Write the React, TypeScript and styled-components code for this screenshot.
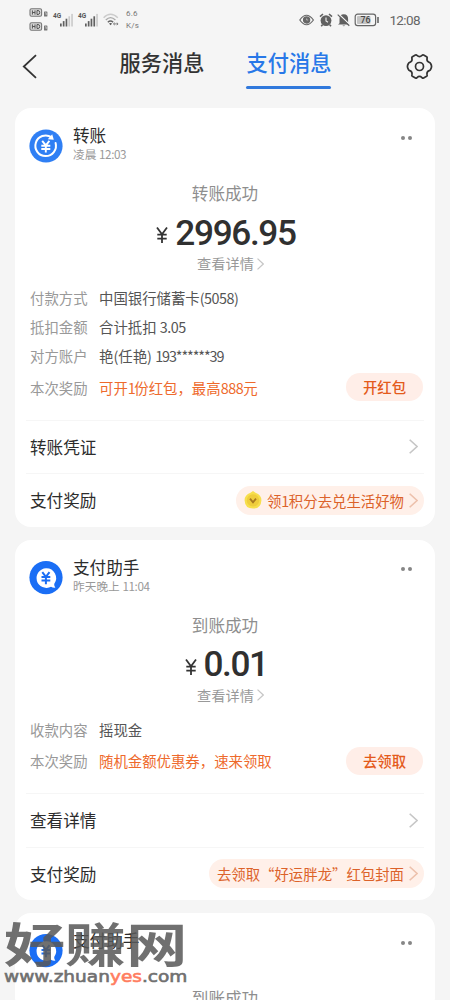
import React from 'react';
import styled, { createGlobalStyle } from 'styled-components';

const Global = createGlobalStyle`
  * { box-sizing: border-box; }
  html, body { margin: 0; padding: 0; overflow: hidden; }
  body {
    background: #f5f5f5;
    color: #333;
    font-family: "Noto Sans CJK SC", sans-serif;
  }
`;

const Page = styled.div`
  position: relative;
  width: 450px;
  height: 1000px;
  overflow: hidden;
  background: #f5f5f5;
`;

const StatusBar = styled.div`
  display: flex;
  justify-content: space-between;
  align-items: center;
  height: 38px;
  padding: 2px 30px 0 29px;
`;

const StatusGroup = styled.div`
  display: flex;
  align-items: center;
`;

const Clock = styled.span`
  font: 400 13.5px/20px Roboto, sans-serif;
  color: #666;
  margin-left: 7px;
  letter-spacing: -0.6px;
`;

const NavBar = styled.div`
  display: flex;
  align-items: center;
  justify-content: space-between;
  height: 57px;
  padding: 0 17px 0 22px;
`;

const Tabs = styled.div`
  display: flex;
  gap: 41px;
  margin-left: 82px;
  flex: 1;
`;

const Tab = styled.div<{ $active?: boolean }>`
  width: 86px;
  height: 51px;
  padding-top: 6px;
  white-space: nowrap;
  text-align: center;
  font-size: 21.2px;
  line-height: 30px;
  font-weight: 500;
  color: ${p => (p.$active ? '#2878e8' : '#333')};
`;

const TabLine = styled.div`
  height: 2.5px;
  margin: 9px 1px 0 0;
  border-radius: 2px;
  background: #3179dc;
`;

const Cards = styled.div`
  display: flex;
  flex-direction: column;
  gap: 13px;
  padding: 13px 15px 0;
`;

const CardBox = styled.section`
  padding: 0 11px;
  border-radius: 16px;
  background: #fff;
`;

const Head = styled.header`
  display: flex;
  height: 71px;
  padding: 21px 12.5px 0 3px;
`;

const HeadText = styled.div`
  flex: 1;
  margin: -5px 0 0 10px;
`;

const Title = styled.div`
  font-size: 16.6px;
  line-height: 23px;
  color: #2c2c2c;
`;

const Time = styled.div`
  font-size: 11.7px;
  line-height: 14px;
  color: #999;
`;

const Digits = styled.span<{ $track?: number }>`
  letter-spacing: ${p => p.$track ?? -0.5}px;
`;

const Dots = styled.div`
  display: flex;
  gap: 2.5px;
  margin-top: 6.5px;
  i { width: 4px; height: 4px; border-radius: 50%; background: #868686; }
`;

const State = styled.div`
  height: 29px;
  line-height: 29px;
  font-size: 16.6px;
  text-align: center;
  color: #8e8e8e;
`;

const Amount = styled.div`
  display: flex;
  justify-content: center;
  align-items: center;
  height: 46px;
  padding: 3px 0 0 2px;
  font: 500 35.2px/46px Roboto, sans-serif;
  color: #303030;
`;

const Yen = styled.svg`
  width: 12px;
  height: 18px;
  margin: 5px 7px 0 0;
`;

const Figure = styled.span<{ $squeeze: number }>`
  letter-spacing: ${p => p.$squeeze}px;
`;

const Detail = styled.div`
  display: flex;
  justify-content: center;
  align-items: center;
  gap: 3px;
  height: 19px;
  margin-bottom: 10px;
  padding-left: 11px;
  font-size: 14.2px;
  line-height: 17px;
  color: #999;
`;

const Info = styled.div<{ $reward?: boolean }>`
  display: flex;
  align-items: center;
  height: ${p => (p.$reward ? 34 : 29)}px;
  padding: 0 1px 0 4px;
  font-size: 14.4px;
  color: ${p => (p.$reward ? '#ee6a2c' : '#555')};
`;

const Label = styled.span`
  width: 69px;
  color: #999;
`;

const Pill = styled.span`
  width: 77px;
  height: 28px;
  margin-left: auto;
  border-radius: 14px;
  background: #ffeee8;
  color: #e45b1c;
  font-weight: 500;
  line-height: 27px;
  text-align: center;
`;

const Actions = styled.div`
  margin-top: 15.5px;
`;

const Action = styled.div`
  display: flex;
  align-items: center;
  justify-content: space-between;
  height: 53.5px;
  padding-left: 4px;
  border-top: 1px solid #f6f6f6;
  font-size: 16.6px;
  color: #2c2c2c;
`;

const Arrow = styled.span`
  display: flex;
  margin-right: 6px;
`;

const Promo = styled.span`
  display: flex;
  align-items: center;
  height: 29px;
  padding: 0 6px 0 8px;
  border-radius: 15px;
  background: #fff0e9;
  color: #dc622a;
  font-size: 14.4px;
  white-space: nowrap;
  svg:last-child { margin-left: 5px; }
`;

const Coin = styled.svg`
  width: 18px;
  height: 18px;
  margin-right: 4.5px;
`;

const Watermark = styled.div`
  position: absolute;
  left: 4px;
  top: 914px;
  width: 184px;
  white-space: nowrap;
`;

const MarkName = styled.div`
  width: 138px;
  height: 54px;
  font-size: 47px;
  line-height: 56px;
  font-weight: 700;
  color: rgba(88, 88, 88, 0.86);
  transform: scaleX(1.3);
  transform-origin: 0 0;
`;

const MarkUrl = styled.div`
  width: 180px;
  padding-top: 1px;
  font: 400 15.5px/16px "DejaVu Sans", sans-serif;
  color: #707070;
  -webkit-text-stroke: 0.6px currentColor;
  transform: scaleX(1.195);
  transform-origin: 0 0;
  b { font-weight: 400; color: #ff7d60; }
`;

function Chevron({ w = 8, h = 15, color = '#c6c6c6' }: { w?: number; h?: number; color?: string }) {
  return (
    <svg width={w} height={h} viewBox="0 0 8 15" fill="none" stroke={color} strokeWidth="1.4" preserveAspectRatio="none">
      <path d="M.6.7 7.2 7.5.6 14.3" />
    </svg>
  );
}

function HdIcon() {
  return (
    <svg width="20" height="24" viewBox="0 0 20 24">
      {[0, 14].map(y => (
        <g key={y} transform={`translate(0 ${y})`}>
          <rect x="1" y=".7" width="11.6" height="7.6" rx="1.5" fill="#d8d8d8" stroke="#777" strokeWidth="1.1" />
          <path d="M3.4 2.4v4.2M6 2.4v4.2M3.4 4.5h2.6M8 2.5v4h1q1.7 0 1.7-2t-1.7-2z" fill="none" stroke="#555" strokeWidth="1" />
          <rect x="15" y="3.4" width="3.4" height="5.2" rx=".6" fill="#777" />
          <path d="M16.1 4.8h1.1v2.2" stroke="#eee" strokeWidth=".6" fill="none" />
        </g>
      ))}
    </svg>
  );
}

const NetLabel = styled.span`
  align-self: flex-start;
  margin: 4px 0 0 4px;
  width: 7px;
  font: 700 6.5px/8px Roboto, sans-serif;
  color: #555;
`;

const Speed = styled.span`
  display: flex;
  flex-direction: column;
  width: 16px;
  margin: 0 0 0 7px;
  font: 400 8px/12px Roboto, sans-serif;
  letter-spacing: 0.2px;
  color: #777;
`;

function Signal({ level }: { level: number }) {
  return (
    <svg width="14" height="14" viewBox="0 0 14 14">
      {[0, 1, 2, 3, 4].map(i => (
        <rect key={i} x={i * 2.8} y={10.5 - i * 2.4} width="1.7" height={3 + i * 2.4} fill={i < level ? '#606060' : '#ccc'} />
      ))}
    </svg>
  );
}

function WifiIcon() {
  return (
    <svg width="16" height="14" viewBox="0 0 16 14" fill="none" strokeWidth="1.4" style={{ marginLeft: 4 }}>
      <path d="M.6 4.8Q7.5-2.2 14.8 4.8" stroke="#ccc" />
      <path d="M2.8 7Q7.5 2.2 12.4 7" stroke="#aaa" />
      <path d="M4.8 9.2Q7.5 6.8 10.2 9.2" stroke="#666" />
      <path d="m6 10.4 1.6 1.9 1.5-1.9Q7.5 9.4 6 10.4Z" fill="#555" />
      <path d="M10.5 10.9h4.5m-3.2-1.2-1.3 1.2 1.3 1.2m2-2.4 1.3 1.2-1.3 1.2" stroke="#777" strokeWidth=".9" />
    </svg>
  );
}

function StatusIcons() {
  return (
    <svg width="82" height="16" viewBox="0 0 82 16" style={{ marginRight: 1 }}>
      <g fill="none" stroke="#666" strokeWidth="1.2">
        <path d="M.8 8Q7.5-1.5 14.4 8 7.5 17.5.8 8Z" />
        <circle cx="7.6" cy="8" r="3.1" fill="#666" />
        <path d="M7.6 6.4v1.6h1.6" stroke="#ccc" strokeWidth=".7" />
      </g>
      <circle cx="27" cy="8.6" r="5.4" fill="#606060" />
      <path d="m21 4.6 3-2.6m9 2.6L30 2M23.5 12.8l-1.3 1.5m8.5-1.5 1.3 1.5" stroke="#606060" strokeWidth="1.6" />
      <path d="M27 5.5v3.4l2 1.4" fill="none" stroke="#eee" strokeWidth="1.1" />
      <path d="M40.5 11.3V7q0-4.5 4.3-4.7 4.3.2 4.3 4.7v4.3l1.4 1.2H39Z" fill="#606060" />
      <path d="M43.4 13.4h2.8q-1.4 1.6-2.8 0Z" fill="#606060" />
      <path d="m39.6 2 12 11.4" stroke="#f5f5f5" strokeWidth="1.4" />
      <path d="m38.7 2.6 11.6 11.2" stroke="#606060" strokeWidth="1.2" />
      <rect x="56.2" y="2.2" width="20.4" height="11.4" rx="2.4" fill="none" stroke="#666" strokeWidth="1.2" />
      <rect x="58" y="4" width="13.5" height="8" rx="1" fill="#c4c4c4" />
      <path d="M79 5v6" stroke="#666" strokeWidth="1.6" />
      <text x="66.4" y="11.1" fontFamily="Roboto" fontSize="8.8" fontWeight="500" fill="#444" textAnchor="middle">76</text>
    </svg>
  );
}

function Gear() {
  return (
    <svg width="27" height="27" viewBox="0 0 27 27" fill="none" stroke="#333" strokeWidth="1.7" strokeLinejoin="round">
      <path d="M9.4 2Q10.3 1.6 11 2.4 13.5 4.8 16 2.4 16.7 1.6 17.6 2L20.6 3.7Q21.4 4.3 21.1 5.3 20.4 8.4 23.3 9.4 24.3 9.7 24.7 10.8 26.4 13.5 24.7 16.2 24.3 17.3 23.3 17.6 20.4 18.6 21.1 21.7 21.4 22.7 20.6 23.3L17.6 25Q16.7 25.4 16 24.6 13.5 22.2 11 24.6 10.3 25.4 9.4 25L6.4 23.3Q5.6 22.7 5.9 21.7 6.6 18.6 3.7 17.6 2.7 17.3 2.3 16.2.6 13.5 2.3 10.8 2.7 9.7 3.7 9.4 6.6 8.4 5.9 5.3 5.6 4.3 6.4 3.7Z" />
      <circle cx="13.5" cy="13.5" r="4" />
    </svg>
  );
}

function TransferIcon() {
  return (
    <svg width="34" height="34" viewBox="0 0 34 34" fill="none">
      <circle cx="17" cy="17" r="16.6" fill="#2f7ff4" />
      <path d="M22.4 8.2A10.3 10.3 0 1 0 26.6 14" stroke="#fff" strokeWidth="2" strokeLinecap="round" />
      <path d="m23.2 5.2 1.6 5.6-6-.6Z" fill="#fff" />
      <path d="m13.2 11.8 3.6 4.6 3.6-4.6M12.3 16.7h9M12.3 20h9M16.8 16.4v7" stroke="#fff" strokeWidth="1.9" />
    </svg>
  );
}

function AssistantIcon() {
  return (
    <svg width="34" height="34" viewBox="0 0 34 34" fill="none">
      <circle cx="17" cy="16.6" r="16.6" fill="#1a6ef5" />
      <path d="M17 7.3a9.8 9.8 0 1 0 5 18.4q2 1.2 4.4.9-1.4-1.6-1.2-3.7A9.8 9.8 0 0 0 17 7.3Z" fill="#fff" />
      <path d="m13.3 11.2 3.6 4.6 3.6-4.6M12.5 16h8.8M12.5 19.4h8.8M16.9 15.8v7.4" stroke="#1a6ef5" strokeWidth="2" />
    </svg>
  );
}

interface CardProps {
  icon: React.ReactNode;
  title: string;
  day: string;
  time: string;
  state: string;
  amount?: string;
  children?: React.ReactNode;
}

function Card({ icon, title, day, time, state, amount, children }: CardProps) {
  return (
    <CardBox>
      <Head>
        {icon}
        <HeadText>
          <Title>{title}</Title>
          <Time>{day} <Digits $track={-0.4}>{time}</Digits></Time>
        </HeadText>
        <Dots><i /><i /></Dots>
      </Head>
      <State>{state}</State>
      {amount && (
        <Amount>
          <Yen viewBox="0 0 12 18" fill="none" stroke="#333" strokeWidth="1.8">
            <path d="m1 1.5 5 6.7 5-6.7M1.3 8.7h9.4M1.3 12.6h9.4M6 8v9" />
          </Yen>
          <Figure $squeeze={amount.length > 4 ? -1.35 : -1.5}>{amount}</Figure>
        </Amount>
      )}
      {amount && <Detail>查看详情<Chevron w={7} h={12} /></Detail>}
      {children}
    </CardBox>
  );
}

export default function App() {
  return (
    <Page>
      <Global />
      <StatusBar>
        <StatusGroup>
          <HdIcon />
          <NetLabel>4G</NetLabel>
          <Signal level={3} />
          <NetLabel>4G</NetLabel>
          <Signal level={4} />
          <WifiIcon />
          <Speed><span>6.6</span><span>K/s</span></Speed>
        </StatusGroup>
        <StatusGroup>
          <StatusIcons />
          <Clock>12:08</Clock>
        </StatusGroup>
      </StatusBar>
      <NavBar>
        <svg width="15" height="25" viewBox="0 0 15 25" fill="none" stroke="#333" strokeWidth="1.8">
          <path d="M14 1.2 1.8 12.5 14 23.8" />
        </svg>
        <Tabs>
          <Tab>服务消息</Tab>
          <Tab $active>支付消息<TabLine /></Tab>
        </Tabs>
        <Gear />
      </NavBar>
      <Cards>
        <Card icon={<TransferIcon />} title="转账" day="凌晨" time="12:03" state="转账成功" amount="2996.95">
          <Info><Label>付款方式</Label>中国银行储蓄卡<Digits>(5058)</Digits></Info>
          <Info><Label>抵扣金额</Label>合计抵扣&nbsp;<Digits>3.05</Digits></Info>
          <Info><Label>对方账户</Label>艳(任艳)&nbsp;<Digits $track={-1.1}>193******39</Digits></Info>
          <Info $reward><Label>本次奖励</Label>可开<Digits $track={-1.5}>1</Digits>份红包，最高<Digits>888</Digits>元<Pill>开红包</Pill></Info>
          <Actions>
            <Action>转账凭证<Arrow><Chevron w={9} /></Arrow></Action>
            <Action>
              支付奖励
              <Promo>
                <Coin viewBox="0 0 18 18">
                  <path d="M9 0 11.5 1.8Q17.5 4 17.4 9.4 17 17.4 9 17.6 1 17.4.6 9.4.5 4 6.5 1.8Z" fill="#f7df4c" />
                  <circle cx="9" cy="9.4" r="6.2" fill="#efcd3c" />
                  <path d="m6 7.6 3 3.8 3-3.8" fill="none" stroke="#a87a20" strokeWidth="1.8" />
                </Coin>
                领<Digits>1</Digits>积分去兑生活好物<Chevron w={9} color="#edc1ac" />
              </Promo>
            </Action>
          </Actions>
        </Card>
        <Card icon={<AssistantIcon />} title="支付助手" day="昨天晚上" time="11:04" state="到账成功" amount="0.01">
          <Info><Label>收款内容</Label>摇现金</Info>
          <Info $reward><Label>本次奖励</Label>随机金额优惠券，速来领取<Pill>去领取</Pill></Info>
          <Actions>
            <Action>查看详情<Arrow><Chevron w={9} /></Arrow></Action>
            <Action>支付奖励<Promo>去领取“好运胖龙”红包封面<Chevron w={9} color="#edc1ac" /></Promo></Action>
          </Actions>
        </Card>
        <Card icon={<AssistantIcon />} title="支付助手" day="" time="" state="到账成功" />
      </Cards>
      <Watermark>
        <MarkName>好赚网</MarkName>
        <MarkUrl>www.zhuan<b>yes</b>.com</MarkUrl>
      </Watermark>
    </Page>
  );
}
